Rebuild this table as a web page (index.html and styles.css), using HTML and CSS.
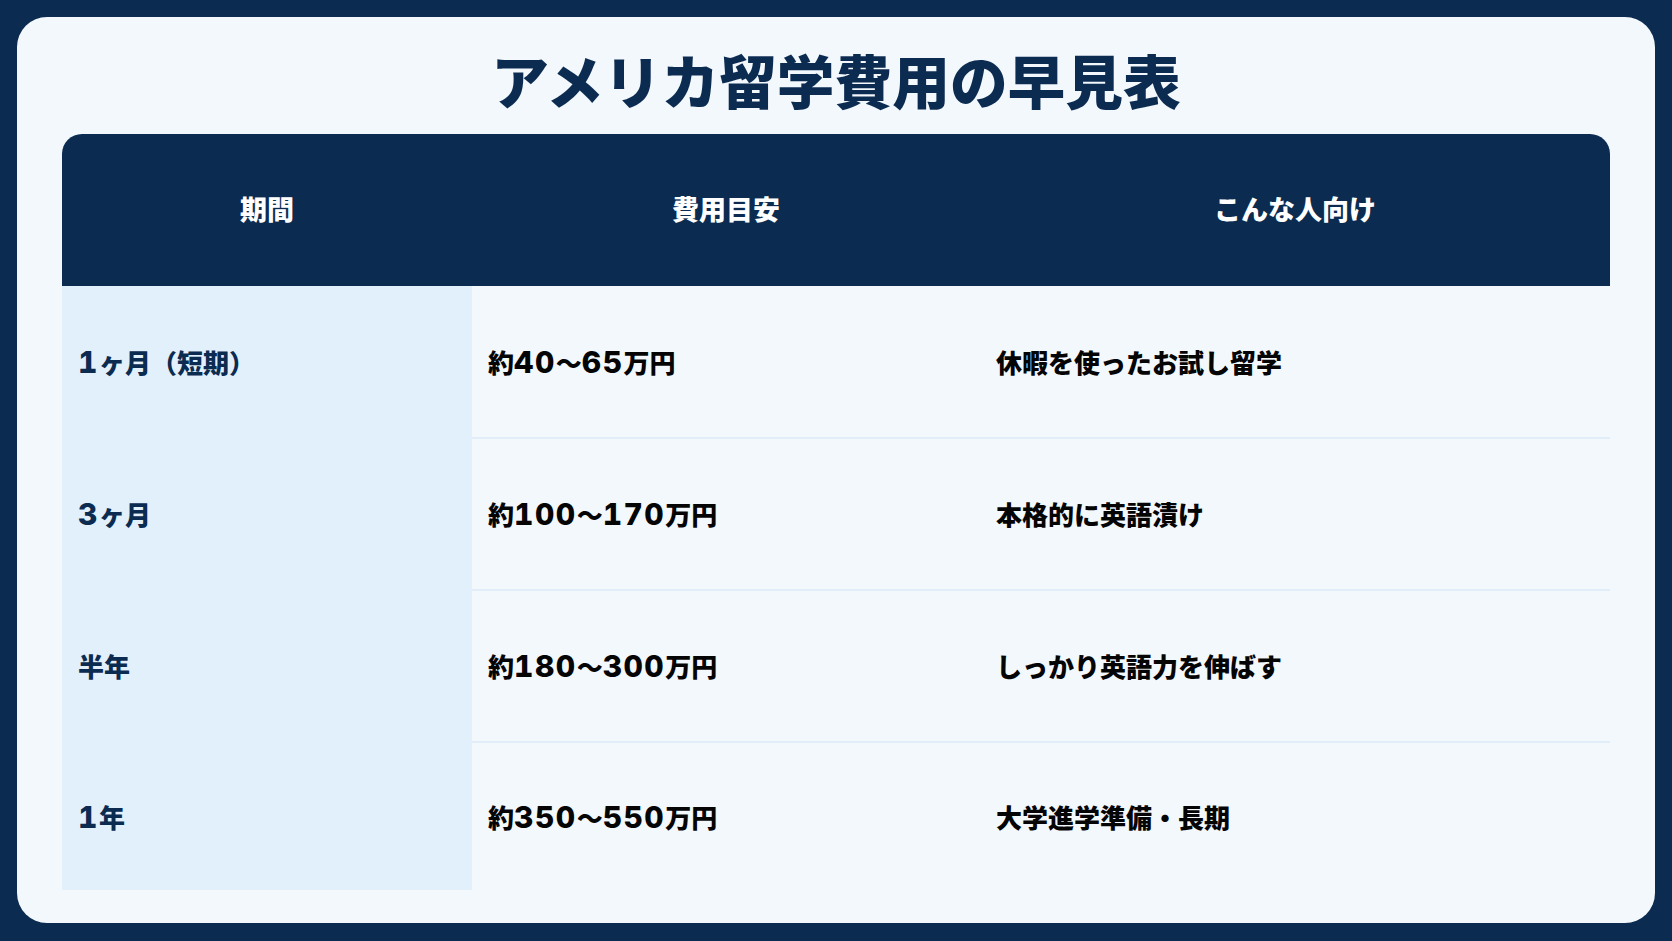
FILE: index.html
```
<!DOCTYPE html>
<html lang="ja">
<head>
<meta charset="utf-8">
<title>アメリカ留学費用の早見表</title>
<link rel="stylesheet" href="styles.css">
</head>
<body>
<div class="card">
  <h1 class="title">アメリカ留学費用の早見表</h1>
  <table class="cost-table">
    <thead>
      <tr>
        <th class="col-period">期間</th>
        <th class="col-cost">費用目安</th>
        <th class="col-who">こんな人向け</th>
      </tr>
    </thead>
    <tbody>
      <tr class="row-1">
        <td class="period"><span class="num">1</span>ヶ月（短期）</td>
        <td>約<span class="num">40</span>〜<span class="num">65</span>万円</td>
        <td>休暇を使ったお試し留学</td>
      </tr>
      <tr class="row-2">
        <td class="period"><span class="num">3</span>ヶ月</td>
        <td>約<span class="num">100</span>〜<span class="num">170</span>万円</td>
        <td>本格的に英語漬け</td>
      </tr>
      <tr class="row-3">
        <td class="period">半年</td>
        <td>約<span class="num">180</span>〜<span class="num">300</span>万円</td>
        <td>しっかり英語力を伸ばす</td>
      </tr>
      <tr class="row-4">
        <td class="period"><span class="num">1</span>年</td>
        <td>約<span class="num">350</span>〜<span class="num">550</span>万円</td>
        <td>大学進学準備・長期</td>
      </tr>
    </tbody>
  </table>
</div>
</body>
</html>
```
FILE: styles.css
```
html, body {
  margin: 0;
  padding: 0;
}
body {
  background: #0b2b51;
  width: 1672px;
  height: 941px;
  padding: 17px 17px 18px;
  box-sizing: border-box;
  font-family: "Noto Sans CJK JP", "Noto Sans", sans-serif;
}
.card {
  background: #f3f8fc;
  border-radius: 30px;
  height: 906px;
  box-sizing: border-box;
  padding: 28px 45px 34px;
  display: flex;
  flex-direction: column;
}
.title {
  margin: 0 0 21px;
  text-align: center;
  font-size: 57.7px;
  line-height: 68px;
  font-weight: 900;
  color: #0b2b51;
  letter-spacing: 0;
}
.cost-table {
  width: 100%;
  border-collapse: separate;
  border-spacing: 0;
  table-layout: fixed;
}
.col-period { width: 410px; }
.col-cost { width: 508px; }
.cost-table thead th {
  background: #0b2b51;
  color: #ffffff;
  height: 152px;
  padding: 0 0 3px;
  box-sizing: border-box;
  font-size: 27px;
  font-weight: 900;
  text-align: center;
  vertical-align: middle;
}
.cost-table thead th:first-child { border-top-left-radius: 20px; }
.cost-table thead th:last-child { border-top-right-radius: 20px; }
.cost-table tbody td {
  height: 152px;
  box-sizing: border-box;
  padding: 0 16px;
  font-size: 26px;
  line-height: 36px;
  font-weight: 900;
  color: #050505;
  vertical-align: middle;
  border-bottom: 2px solid #e1eefa;
  white-space: nowrap;
}
.cost-table tbody .row-1 td { height: 153px; }
.cost-table tbody .row-4 td { border-bottom: none; height: 147px; }
.cost-table tbody td.period {
  background: #e2f0fc;
  color: #0b2b51;
  border-bottom-color: #e2f0fc;
}
.num {
  font-family: "Inter", "Noto Sans", sans-serif;
  font-weight: 800;
  font-size: 30px;
  letter-spacing: 1.5px;
  font-variant-numeric: tabular-nums;
}
```
